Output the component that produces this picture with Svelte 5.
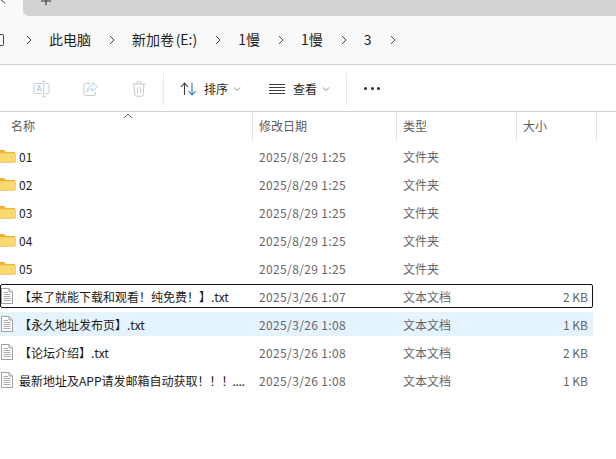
<script>
  const crumbs = ['此电脑', '新加卷 (E:)', '1慢', '1慢', '3'];
  const folders = ['01', '02', '03', '04', '05'];
  const files = [
    { name: '【来了就能下载和观看！纯免费！】.txt', date: '2025/3/26 1:07', size: '2 KB', cls: 'focused', tail: '' },
    { name: '【永久地址发布页】.txt', date: '2025/3/26 1:08', size: '1 KB', cls: 'hover', tail: '' },
    { name: '【论坛介绍】.txt', date: '2025/3/26 1:08', size: '2 KB', cls: '', tail: '' },
    { name: '最新地址及APP请发邮箱自动获取！！！', date: '2025/3/26 1:08', size: '1 KB', cls: '', tail: '....' }
  ];
</script>

<div class="window">
  <div class="tabs">
    <div class="tab-current">
      <svg class="tab-x" width="10" height="10" viewBox="0 0 10 10"><path d="M1 0 L5 3" fill="none" stroke="#444" stroke-width="1"/></svg>
    </div>
    <div class="tab-strip">
      <svg class="plus" width="10" height="8" viewBox="0 0 10 8"><path d="M5 0V5M0 1H10" fill="none" stroke="#333" stroke-width="1.1"/></svg>
    </div>
  </div>

  <div class="address">
    <div class="pc-stub"></div>
    {#each crumbs as c}
      <svg class="chev" width="8" height="10" viewBox="0 0 8 10"><path d="M2 1 L6 5 L2 9" fill="none" stroke="#444" stroke-width="1"/></svg>
      <span class="crumb">{c}</span>
    {/each}
    <svg class="chev" width="8" height="10" viewBox="0 0 8 10"><path d="M2 1 L6 5 L2 9" fill="none" stroke="#444" stroke-width="1"/></svg>
  </div>

  <div class="toolbar">
    <div class="tool-group">
      <svg width="17" height="18" viewBox="0 0 17 18" fill="none" stroke="#c3cdd6" stroke-width="1">
        <path d="M9 3.5H2.5a1.5 1.5 0 0 0-1.5 1.5v7a1.5 1.5 0 0 0 1.5 1.5H9M12.5 3.5h2a1.5 1.5 0 0 1 1.5 1.5v7a1.5 1.5 0 0 1-1.5 1.5h-2" />
        <path d="M9 1.2h3.5M10.8 1.2v15.6M9 16.8h3.5" stroke="#b5d3ec"/>
        <path d="M4 11.5 L6.2 5.5 L8.4 11.5 M4.8 9.6H7.6" stroke="#a9cbe8"/>
      </svg>
      <svg width="16" height="16" viewBox="0 0 16 16" fill="none" stroke="#c3cdd6" stroke-width="1">
        <path d="M7 2.5H2.5A1.5 1.5 0 0 0 1 4v9a1.5 1.5 0 0 0 1.5 1.5h8.5A1.5 1.5 0 0 0 12.5 13v-2"/>
        <path d="M9.5 1.5 L15 5.8 L9.5 10 V7.6 C7 7.6 5.2 8.6 4 11 C4.2 7.4 6.4 4.4 9.5 4 Z" stroke="#b5d3ec"/>
      </svg>
      <svg width="14" height="16" viewBox="0 0 14 16" fill="none" stroke="#c6c6c6" stroke-width="1">
        <path d="M0.5 3H13.5M5 3V1.5a1 1 0 0 1 1-1h2a1 1 0 0 1 1 1V3M2 3l.8 10.8a1.5 1.5 0 0 0 1.5 1.4h5.4a1.5 1.5 0 0 0 1.5-1.4L12 3M5.5 6v6M8.5 6v6"/>
      </svg>
    </div>
    <div class="sep"></div>
    <div class="tool sort">
      <svg width="16" height="14" viewBox="0 0 16 14" fill="none" stroke-width="1.1">
        <path d="M1 5 L4.5 1 L8 5 M4.5 1V13" stroke="#3d3d3d"/>
        <path d="M8.5 9 L12 13 L15.5 9 M12 1V13" stroke="#1a75c4"/>
      </svg>
      <span>排序</span>
      <svg class="down" width="8" height="6" viewBox="0 0 8 6"><path d="M1 1.5 L4 4.5 L7 1.5" fill="none" stroke="#8a8a8a" stroke-width="1"/></svg>
    </div>
    <div class="tool view">
      <svg width="16" height="12" viewBox="0 0 16 12" fill="none" stroke="#3d3d3d" stroke-width="1">
        <path d="M0 1.5H16M0 4.5H16M0 7.5H16M0 10.5H16"/>
      </svg>
      <span>查看</span>
      <svg class="down" width="8" height="6" viewBox="0 0 8 6"><path d="M1 1.5 L4 4.5 L7 1.5" fill="none" stroke="#8a8a8a" stroke-width="1"/></svg>
    </div>
    <div class="sep sep2"></div>
    <div class="dots"><i></i><i></i><i></i></div>
  </div>

  <div class="header">
    <div class="h-cell h-name">名称
      <svg class="sort-caret" width="10" height="6" viewBox="0 0 10 6"><path d="M1 5 L5 1 L9 5" fill="none" stroke="#666" stroke-width="1"/></svg>
    </div>
    <div class="h-cell h-date">修改日期</div>
    <div class="h-cell h-type">类型</div>
    <div class="h-cell h-size">大小</div>
  </div>

  <div class="rows">
    {#each folders as f}
      <div class="row">
        <div class="name">
          <svg class="ficon" width="16" height="14" viewBox="0 0 16 14">
            <path d="M-4 1 H4 L6 3 H15 V5 H-4 Z" fill="#f0b429"/>
            <path d="M-4 4 H14.6 a.8 .8 0 0 1 .8 .8 V12.6 a.8 .8 0 0 1 -.8 .8 H-4 Z" fill="#fbd96f" stroke="#e7b53f" stroke-width=".6"/>
          </svg>
          <span>{f}</span>
        </div>
        <div class="date">2025/8/29 1:25</div>
        <div class="type">文件夹</div>
        <div class="size"></div>
      </div>
    {/each}
    {#each files as f}
      <div class="row {f.cls}">
        <div class="name">
          <svg class="ticon" width="12" height="16" viewBox="0 0 12 16" fill="none">
            <path d="M0.5 0.5H8L11.5 4V15.5H0.5Z" fill="#fff" stroke="#a0a0a0"/>
            <path d="M8 0.5V4H11.5" stroke="#a0a0a0"/>
            <path d="M2.5 4.5H7M2.5 6.5H9.5M2.5 8.5H9.5M2.5 10.5H9.5M2.5 12.5H9.5" stroke="#adadad"/>
          </svg>
          <span>{f.name}</span>{#if f.tail}<span class="tail">{f.tail}</span>{/if}
        </div>
        <div class="date">{f.date}</div>
        <div class="type">文本文档</div>
        <div class="size">{f.size}</div>
      </div>
    {/each}
  </div>
</div>

<style>
  :global(body) {
    margin: 0;
    background: #fff;
  }
  .window {
    width: 616px;
    height: 459px;
    overflow: hidden;
    background: #fff;
    font-family: "Noto Sans CJK SC", "Liberation Sans", sans-serif;
    font-size: 12px;
    color: #1b1b1b;
  }
  .tabs {
    display: flex;
    height: 16px;
    background: #f3f3f3;
  }
  .tab-current {
    width: 23px;
    background: #f9f9f9;
    overflow: hidden;
  }
  .tab-x {
    display: block;
  }
  .tab-strip {
    flex: 1;
    background: #d3d3d3;
    border-bottom-left-radius: 6px;
    padding-left: 18px;
  }
  .plus {
    display: block;
  }
  .address {
    height: 49px;
    box-sizing: border-box;
    background: #f9f9f9;
    border-bottom: 1px solid #d2d2d2;
    display: flex;
    align-items: center;
    font-size: 14px;
    color: #1f1f1f;
  }
  .pc-stub {
    width: 4px;
    height: 10px;
    border: 1px solid #444;
    border-left: 0;
    border-radius: 0 2px 2px 0;
    margin-left: -1px;
    margin-right: 21px;
  }
  .chev {
    flex: none;
    margin-right: 16px;
  }
  .crumb {
    margin-right: 17px;
    margin-bottom: 2px;
    white-space: nowrap;
    word-spacing: -1.5px;
  }
  .toolbar {
    height: 47px;
    box-sizing: border-box;
    border-bottom: 1px solid #d0d0d0;
    display: flex;
    align-items: center;
    padding-left: 33px;
    padding-top: 1px;
    background: #fff;
  }
  .tool-group {
    display: flex;
    align-items: center;
    gap: 33px;
    width: 130px;
  }
  .sep {
    width: 1px;
    height: 32px;
    background: #e8e8e8;
  }
  .tool {
    display: flex;
    align-items: center;
    font-size: 12px;
    color: #1f1f1f;
  }
  .tool span {
    margin-left: 8px;
    margin-right: 5px;
  }
  .sort {
    margin-left: 16px;
    width: 89px;
  }
  .view {
    width: 77px;
  }
  .dots {
    display: flex;
    gap: 3.5px;
    margin-left: 17px;
  }
  .dots i {
    width: 3px;
    height: 3px;
    border-radius: 50%;
    background: #2a2a2a;
  }
  .header {
    display: grid;
    grid-template-columns: 253px 144px 120px 80px;
    height: 28px;
    align-items: stretch;
    color: #5c5c5c;
    font-size: 12px;
  }
  .h-cell {
    border-right: 1px solid #e5e5e5;
    display: flex;
    align-items: center;
    padding-left: 6px;
    padding-bottom: 2px;
    position: relative;
  }
  .h-name {
    padding-left: 11px;
  }
  .sort-caret {
    position: absolute;
    left: 123px;
    top: 1px;
  }
  .rows {
    display: flex;
    flex-direction: column;
    gap: 4px;
    padding-top: 4px;
    width: 593px;
  }
  .row {
    display: grid;
    grid-template-columns: 259px 144px 1fr 60px;
    height: 24px;
    box-sizing: border-box;
    align-items: center;
    border-radius: 2px;
    color: #666;
    white-space: nowrap;
  }
  .row.hover {
    background: #e5f3ff;
  }
  .row.focused {
    outline: 1px solid #111;
    outline-offset: -1px;
  }
  .name {
    display: flex;
    align-items: center;
    color: #1b1b1b;
    overflow: hidden;
  }
  .ficon {
    flex: none;
    margin-right: 3px;
  }
  .ticon {
    flex: none;
    margin: 0 6px 0 1px;
  }
  .tail {
    margin-left: -1px;
    letter-spacing: -0.3px;
  }
  .date {
    letter-spacing: 0.36px;
  }
  .size {
    text-align: right;
    padding-right: 5px;
  }
</style>
